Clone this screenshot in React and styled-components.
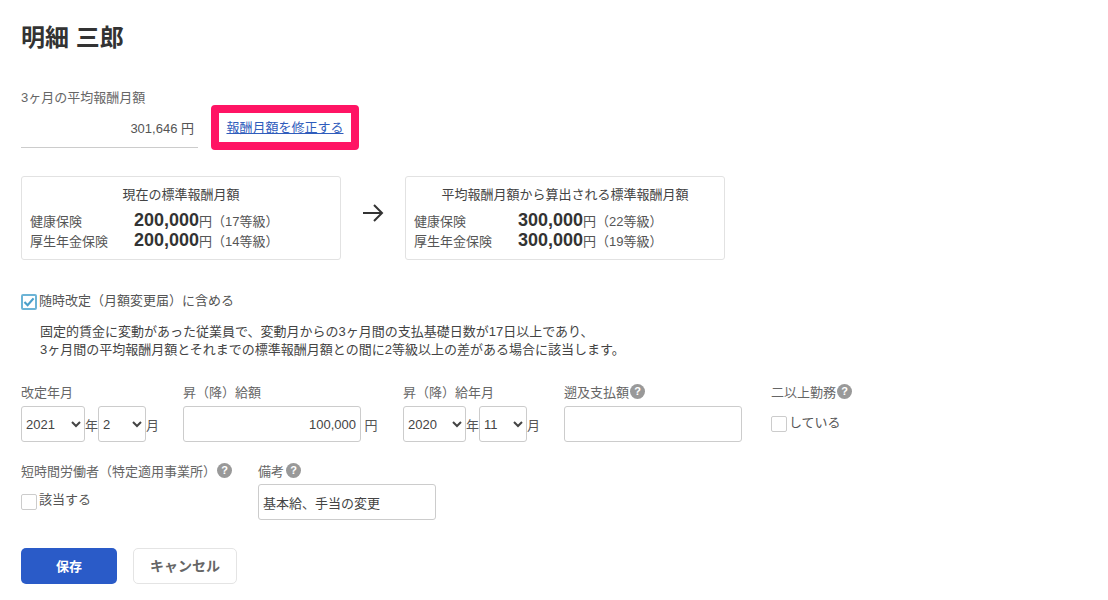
import React from "react";
import styled, { createGlobalStyle } from "styled-components";

const GlobalStyle = createGlobalStyle`
  html, body {
    margin: 0;
    padding: 0;
    background: #fff;
    color: #333;
    font-family: "Liberation Sans", "Noto Sans CJK JP", sans-serif;
    font-size: 13px;
  }
  * { box-sizing: border-box; }
`;

const Page = styled.div`
  width: 1108px;
  height: 600px;
  padding: 24px 21px 0;
  overflow: hidden;
`;

const Title = styled.h1`
  margin: 0;
  font-size: 24px;
  line-height: 28px;
  font-weight: 700;
  color: #333;
`;

const FieldLabel = styled.div`
  margin-top: 37px;
  font-size: 13px;
  line-height: 18px;
  color: #666;
`;

const AverageBlock = styled.div`
  display: flex;
  align-items: flex-end;
  gap: 13px;
`;

const AverageValue = styled.div`
  width: 177px;
  height: 41px;
  margin-bottom: 2px;
  padding: 13px 4px 0 0;
  border-bottom: 1px solid #ccc;
  text-align: right;
  font-size: 13px;
  line-height: 18px;
  color: #555;
`;

const Highlight = styled.div`
  width: 148px;
  height: 45px;
  margin-top: -2px;
  padding-bottom: 2px;
  border: 8px solid #ff1464;
  border-radius: 4px;
  display: flex;
  align-items: center;
  justify-content: center;
`;

const EditLink = styled.a`
  font-size: 13px;
  color: #2f5cbc;
  text-decoration: underline;
`;

const CardRow = styled.div`
  margin-top: 26px;
  display: flex;
  align-items: center;
`;

const Card = styled.div`
  width: 320px;
  height: 84px;
  padding: 9px 8px 0;
  border: 1px solid #e2e2e2;
  border-radius: 3px;
`;

const CardTitle = styled.div`
  text-align: center;
  font-size: 13px;
  line-height: 18px;
  color: #444;
  margin-bottom: 6px;
`;

const CardLine = styled.div`
  display: flex;
  align-items: baseline;
  height: 20px;
  font-size: 13px;
  line-height: 20px;
  color: #555;
`;

const InsuranceName = styled.span`
  width: 104px;
`;

const Amount = styled.strong`
  font-size: 18px;
  font-weight: 700;
  color: #333;
`;

const ArrowBox = styled.div`
  width: 64px;
  display: flex;
  justify-content: center;
  padding-bottom: 10px;
`;

const CheckRow = styled.label`
  display: flex;
  align-items: flex-start;
  gap: 2px;
  margin-top: ${(p) => p.$top}px;
  font-size: 13px;
  line-height: 16px;
  color: #555;
`;

const CheckText = styled.span`
  margin-top: ${(p) => p.$lift ?? -2}px;
`;

const Box = styled.span`
  width: 16px;
  height: 16px;
  flex: none;
  border-radius: 2px;
  border: ${(p) => (p.$checked ? "2px solid #6cb4d6" : "1px solid #ccc")};
  background: #fff;
  display: flex;
  align-items: center;
  justify-content: center;
`;

const Note = styled.p`
  margin: 13px 0 0 19px;
  font-size: 13px;
  line-height: 18px;
  color: #444;
`;

const FormRow = styled.div`
  margin-top: ${(p) => p.$top}px;
  display: flex;
  align-items: flex-start;
`;

const Field = styled.div`
  width: ${(p) => p.$width}px;
  flex: none;
`;

const Label = styled.div`
  display: flex;
  align-items: center;
  gap: ${(p) => p.$gap ?? 1}px;
  height: 18px;
  font-size: 13px;
  color: #666;
  margin-bottom: ${(p) => p.$below ?? 6}px;
`;

const Controls = styled.div`
  display: flex;
  align-items: center;
  font-size: 13px;
  color: #555;
`;

const Select = styled.select`
  width: ${(p) => p.$width}px;
  height: 36px;
  padding: 0;
  border: 1px solid #ccc;
  border-radius: 3px;
  background: #fff;
  font: 13px "Liberation Sans", "Noto Sans CJK JP", sans-serif;
  color: #444;
`;

const Unit = styled.span`
  width: ${(p) => p.$width}px;
  text-align: center;
`;

const Input = styled.input`
  width: 178px;
  height: 36px;
  padding: 0 4px;
  border: 1px solid #ccc;
  border-radius: 3px;
  font: 13px "Liberation Sans", "Noto Sans CJK JP", sans-serif;
  color: #444;
  text-align: ${(p) => (p.$right ? "right" : "left")};
`;

const HelpBadge = styled.span`
  width: 15px;
  height: 15px;
  border-radius: 50%;
  background: #999;
  color: #fff;
  font-size: 11px;
  font-weight: 700;
  line-height: 15px;
  text-align: center;
`;

const Buttons = styled.div`
  margin-top: 28px;
  display: flex;
  gap: 16px;
`;

const SaveButton = styled.button`
  width: 96px;
  height: 36px;
  padding: 0 0 2px;
  border: none;
  border-radius: 5px;
  background: #2a5bc8;
  color: #fff;
  font: 700 13px "Liberation Sans", "Noto Sans CJK JP", sans-serif;
`;

const CancelButton = styled.button`
  width: 104px;
  height: 36px;
  padding: 0 0 2px;
  border: 1px solid #e4e4e4;
  border-radius: 5px;
  background: #fff;
  color: #666;
  font: 700 14px "Liberation Sans", "Noto Sans CJK JP", sans-serif;
`;

const Arrow = () => (
  <svg width="22" height="20" viewBox="0 0 22 20" fill="none" stroke="#333" strokeWidth="2">
    <path d="M1 10h19M12 2l8 8-8 8" />
  </svg>
);

const Tick = () => (
  <svg width="12" height="10" viewBox="0 0 13 11" fill="none" stroke="#4a9fc9" strokeWidth="2.4">
    <path d="M1.5 5.5l3.5 3.5 6.5-7.5" />
  </svg>
);

const InsuranceCard = ({ title, amount, health, pension }) => (
  <Card>
    <CardTitle>{title}</CardTitle>
    <CardLine>
      <InsuranceName>健康保険</InsuranceName>
      <Amount>{amount}</Amount>円（{health}等級）
    </CardLine>
    <CardLine>
      <InsuranceName>厚生年金保険</InsuranceName>
      <Amount>{amount}</Amount>円（{pension}等級）
    </CardLine>
  </Card>
);

const App = () => (
  <>
    <GlobalStyle />
    <Page>
      <Title>明細 三郎</Title>

      <FieldLabel>3ヶ月の平均報酬月額</FieldLabel>
      <AverageBlock>
        <AverageValue>301,646 円</AverageValue>
        <Highlight>
          <EditLink href="#">報酬月額を修正する</EditLink>
        </Highlight>
      </AverageBlock>

      <CardRow>
        <InsuranceCard title="現在の標準報酬月額" amount="200,000" health="17" pension="14" />
        <ArrowBox>
          <Arrow />
        </ArrowBox>
        <InsuranceCard title="平均報酬月額から算出される標準報酬月額" amount="300,000" health="22" pension="19" />
      </CardRow>

      <CheckRow $top={34}>
        <Box $checked>
          <Tick />
        </Box>
        <CheckText $lift={-1}>随時改定（月額変更届）に含める</CheckText>
      </CheckRow>
      <Note>
        固定的賃金に変動があった従業員で、変動月からの3ヶ月間の支払基礎日数が17日以上であり、
        <br />
        3ヶ月間の平均報酬月額とそれまでの標準報酬月額との間に2等級以上の差がある場合に該当します。
      </Note>

      <FormRow $top={23}>
        <Field $width={162}>
          <Label>改定年月</Label>
          <Controls>
            <Select $width={64} defaultValue="2021">
              <option>2021</option>
            </Select>
            <Unit $width={13}>年</Unit>
            <Select $width={48} defaultValue="2">
              <option>2</option>
            </Select>
            <Unit $width={13}>月</Unit>
          </Controls>
        </Field>
        <Field $width={220}>
          <Label>昇（降）給額</Label>
          <Controls>
            <Input $right defaultValue="100,000" />
            <Unit $width={20}>円</Unit>
          </Controls>
        </Field>
        <Field $width={161}>
          <Label>昇（降）給年月</Label>
          <Controls>
            <Select $width={63} defaultValue="2020">
              <option>2020</option>
            </Select>
            <Unit $width={13}>年</Unit>
            <Select $width={48} defaultValue="11">
              <option>11</option>
            </Select>
            <Unit $width={13}>月</Unit>
          </Controls>
        </Field>
        <Field $width={207}>
          <Label>
            遡及支払額<HelpBadge>?</HelpBadge>
          </Label>
          <Input />
        </Field>
        <Field $width={110}>
          <Label>
            二以上勤務<HelpBadge>?</HelpBadge>
          </Label>
          <CheckRow $top={16}>
            <Box />
            <CheckText $lift={-1}>している</CheckText>
          </CheckRow>
        </Field>
      </FormRow>

      <FormRow $top={19}>
        <Field $width={237}>
          <Label $below={5}>
            短時間労働者（特定適用事業所）<HelpBadge>?</HelpBadge>
          </Label>
          <CheckRow $top={15}>
            <Box />
            <CheckText>該当する</CheckText>
          </CheckRow>
        </Field>
        <Field $width={178}>
          <Label $gap={2} $below={5}>
            備考<HelpBadge>?</HelpBadge>
          </Label>
          <Input defaultValue="基本給、手当の変更" />
        </Field>
      </FormRow>

      <Buttons>
        <SaveButton>保存</SaveButton>
        <CancelButton>キャンセル</CancelButton>
      </Buttons>
    </Page>
  </>
);

export default App;
